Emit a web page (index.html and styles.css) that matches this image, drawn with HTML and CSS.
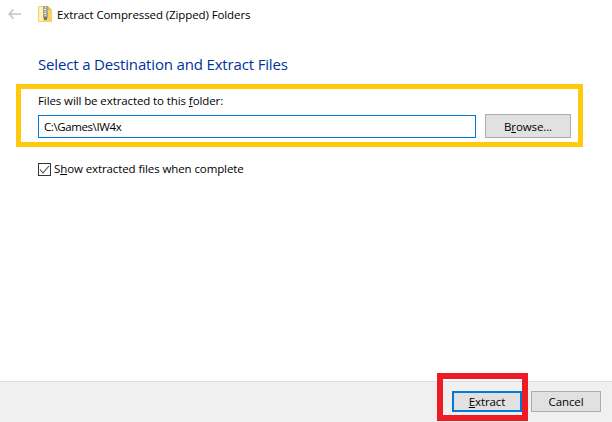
FILE: index.html
```html
<!DOCTYPE html>
<html>
  <head>
    <title>Extract Compressed (Zipped) Folders</title>
    <link rel="stylesheet" href="styles.css">
  </head>
  <body>
    <div class="wizard">
      <div class="titlebar">
        <svg class="back-icon" width="13" height="10" viewBox="0 0 13 10">
          <path d="M5.500.5 1.200 5l4.300 4.500M1.500 5H13" fill="none" stroke="#c4c4c4" stroke-width="1.600"/>
        </svg>
        <svg class="zip-icon" width="14" height="16" viewBox="0 0 14 16">
          <path d="M0 0h10v4h4v12H0z" fill="#f5d468"/>
          <path d="M1 1h4v14H1z" fill="#fdf0bb"/>
          <path d="M10 0l4 4h-4z" fill="#e3bd4e"/>
          <path d="M5 0h5v12H5z" fill="#a8a490"/>
          <path d="M7 1h1v1H7zM6 3h2v1H6zM7 5h1v1H7zM6 7h2v1H6zM7 9h1v1H7z" fill="#eee"/>
          <path d="M6 11h3v3H6z" fill="#77736a"/>
        </svg>
        <span class="title-text">Extract Compressed (Zipped) Folders</span>
      </div>

      <div class="content">
        <h2>Select a Destination and Extract Files</h2>
        <label class="path-label" for="path">Files will be extracted to this <u>f</u>older:</label>
        <div class="path-row">
          <input class="path-input" id="path" type="text" value="C:\Games\IW4x">
          <button class="btn btn-browse">B<u>r</u>owse...</button>
        </div>
        <label class="check-row">
          <span class="check-box">
            <svg width="11" height="11" viewBox="0 0 11 11">
              <path d="M1 5.500 4 9l6-7" fill="none" stroke="#444" stroke-width="1.100"/>
            </svg>
          </span>
          <span>S<u>h</u>ow extracted files when complete</span>
        </label>
      </div>

      <div class="footer">
        <button class="btn btn-default"><u>E</u>xtract</button>
        <button class="btn">Cancel</button>
      </div>

      <div class="mark mark-yellow"></div>
      <div class="mark mark-red"></div>
    </div>
  </body>
</html>
```

FILE: styles.css
```css
* {
  box-sizing: border-box;
}
html, body {
  margin: 0;
  padding: 0;
}
body {
  background-color: #fff;
  color: #000;
  font-family: "Open Sans", "Noto Sans", sans-serif;
  font-size: 11.5px;
  letter-spacing: -0.1px;
}
.wizard {
  position: relative;
  width: 612px;
  height: 422px;
  display: flex;
  flex-direction: column;
  overflow: hidden;
}
.titlebar {
  display: flex;
  align-items: center;
  height: 28px;
  padding-left: 8px;
}
.back-icon {
  margin-right: 17px;
}
.zip-icon {
  margin-right: 5px;
}
.title-text {
  margin-top: 2px;
  line-height: 16px;
}
.content {
  flex: 1;
  padding: 26px 41px 0 38px;
}
h2 {
  margin: 0 0 19px;
  color: #003399;
  font-size: 15px;
  font-weight: normal;
  letter-spacing: -0.16px;
  line-height: 20px;
}
.path-label {
  display: block;
  line-height: 16px;
  margin-bottom: 5px;
}
.path-row {
  display: flex;
  align-items: center;
  gap: 9px;
}
.path-input {
  width: 438px;
  height: 23px;
  padding: 0 5px;
  border: 1px solid #0078d7;
  outline: none;
  font: inherit;
  letter-spacing: -0.4px;
  color: #000;
}
.btn {
  width: 70px;
  height: 21px;
  padding: 0;
  background-color: #e1e1e1;
  border: 1px solid #adadad;
  font: inherit;
  letter-spacing: inherit;
  color: #000;
}
.btn-browse {
  width: 86px;
  height: 24px;
}
.btn-default {
  border: 2px solid #0078d7;
}
.check-row {
  display: flex;
  gap: 3px;
  margin-top: 23px;
  line-height: 16px;
}
.check-box {
  display: flex;
  width: 13px;
  height: 13px;
  margin-top: 2px;
  border: 1px solid #333;
  align-items: center;
  justify-content: center;
}
.footer {
  display: flex;
  justify-content: flex-end;
  gap: 9px;
  height: 41px;
  padding: 9px 11px 0 0;
  background-color: #f0f0f0;
  border-top: 1px solid #dfdfdf;
}

/* annotation boxes drawn over the dialog */
.mark {
  position: absolute;
  pointer-events: none;
}
.mark-yellow {
  left: 16px;
  top: 84px;
  width: 567px;
  height: 63px;
  border: 5px solid #ffc90e;
}
.mark-red {
  left: 437px;
  top: 373px;
  width: 91px;
  height: 48px;
  border: 6px solid #ed1c24;
}
```
